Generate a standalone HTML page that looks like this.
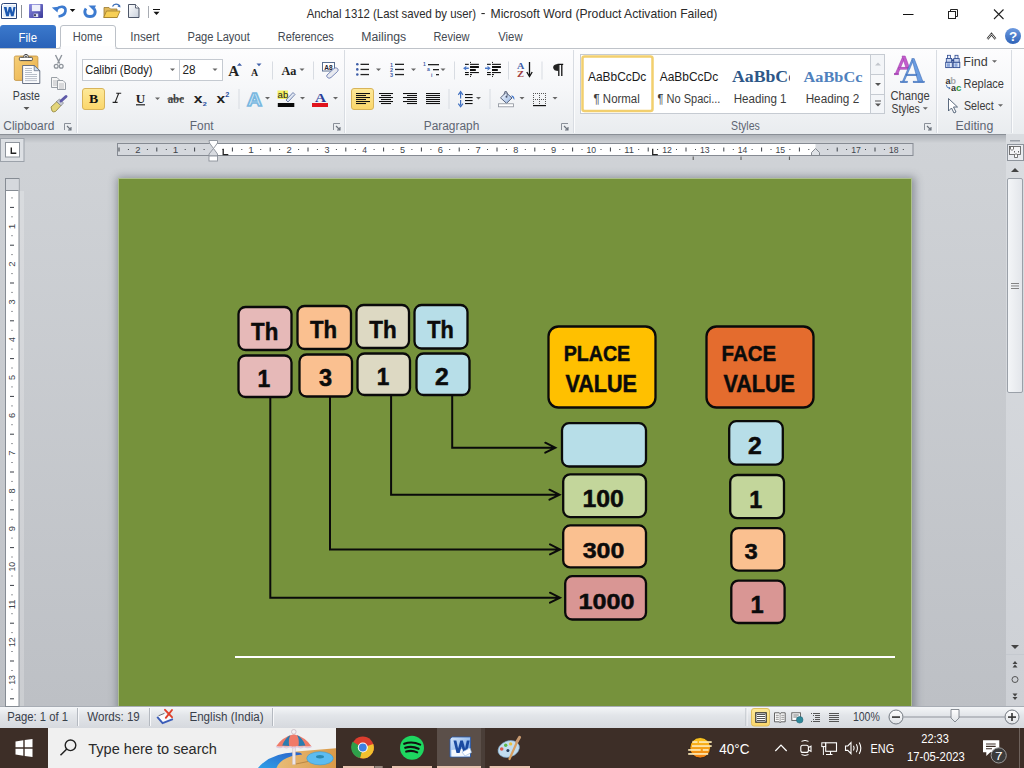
<!DOCTYPE html>
<html><head><meta charset="utf-8">
<style>
*{margin:0;padding:0;box-sizing:border-box}
html,body{width:1024px;height:768px;overflow:hidden;background:#cdd0d4;font-family:"Liberation Sans",sans-serif;position:relative}
.a{position:absolute}
svg text{white-space:pre}
</style></head><body>
<div class="a" style="left:0;top:0;width:1024px;height:48px;background:#fff"></div>
<div class="a" style="left:0;top:48px;width:1024px;height:87px;background:linear-gradient(#fdfdfe 0%,#f6f7f9 45%,#e9ecef 100%);border-top:1px solid #bfc3c9;border-bottom:1px solid #8a8f96"></div>
<div class="a" style="left:0;top:135px;width:1024px;height:571px;background:linear-gradient(#d0d3d7,#bdc0c5)"></div>
<div class="a" style="left:0;top:135px;width:1024px;height:8px;background:linear-gradient(#aeb2b8,#cfd2d6)"></div>
<div class="a" style="left:19px;top:191px;width:5px;height:515px;background:rgba(255,255,255,.22)"></div>
<div class="a" style="left:118px;top:178px;width:794px;height:540px;background:#76923c;border:1px solid #adc08a;box-shadow:1px 1px 8px 2px rgba(60,66,80,.45)"></div>
<div class="a" style="left:0;top:706px;width:1024px;height:22px;background:linear-gradient(#f4f6f8,#e2e5e9 40%,#d6d9de);border-top:1px solid #a8adb5"></div>
<div class="a" style="left:0;top:728px;width:1024px;height:40px;background:#3d2e27"></div>
<svg class="a" style="left:0;top:0" width="1024" height="768" viewBox="0 0 1024 768">
<defs>
<linearGradient id="gFile" x1="0" y1="0" x2="0" y2="1"><stop offset="0" stop-color="#3b79cc"/><stop offset="1" stop-color="#2a62b8"/></linearGradient>
<linearGradient id="gHelp" x1="0" y1="0" x2="0" y2="1"><stop offset="0" stop-color="#6d9ae0"/><stop offset="1" stop-color="#2f63b8"/></linearGradient>
<linearGradient id="gSel" x1="0" y1="0" x2="0" y2="1"><stop offset="0" stop-color="#fde99a"/><stop offset="1" stop-color="#fbd66a"/></linearGradient>
<linearGradient id="gThumb" x1="0" y1="0" x2="1" y2="0"><stop offset="0" stop-color="#f4f6f8"/><stop offset="1" stop-color="#e2e5ea"/></linearGradient>
<linearGradient id="gCirc" x1="0" y1="0" x2="0" y2="1"><stop offset="0" stop-color="#ffffff"/><stop offset="1" stop-color="#dfe2e6"/></linearGradient>
<linearGradient id="gShadowR" x1="0" y1="0" x2="1" y2="0"><stop offset="0" stop-color="#8f949c"/><stop offset="1" stop-color="#c9ccd1" stop-opacity="0"/></linearGradient>
<linearGradient id="gSB" x1="0" y1="0" x2="0" y2="1"><stop offset="0" stop-color="#dadde1"/><stop offset="1" stop-color="#cdd0d5"/></linearGradient>
<linearGradient id="gSun" x1="0" y1="0" x2="0" y2="1"><stop offset="0" stop-color="#fcc820"/><stop offset="1" stop-color="#ee7a10"/></linearGradient>
<linearGradient id="gWord" x1="0" y1="0" x2="1" y2="1"><stop offset="0" stop-color="#d6e6fa"/><stop offset="0.5" stop-color="#9cc0ee"/><stop offset="1" stop-color="#3c74c8"/></linearGradient>
<linearGradient id="gSand" x1="0" y1="0" x2="1" y2="0"><stop offset="0" stop-color="#e8bc78"/><stop offset="1" stop-color="#d99a48"/></linearGradient>
<linearGradient id="gPath" x1="0" y1="1" x2="1" y2="0"><stop offset="0" stop-color="#2fa0e8"/><stop offset="1" stop-color="#2a60c8"/></linearGradient>
<linearGradient id="gBucket" x1="0" y1="0" x2="1" y2="1"><stop offset="0" stop-color="#ffffff"/><stop offset="1" stop-color="#8fb0e0"/></linearGradient>
<linearGradient id="gClip" x1="0" y1="0" x2="1" y2="1"><stop offset="0" stop-color="#f6cf78"/><stop offset="1" stop-color="#eab04a"/></linearGradient>
<linearGradient id="gSave" x1="0" y1="0" x2="1" y2="1"><stop offset="0" stop-color="#8a8ae0"/><stop offset="1" stop-color="#3a3a98"/></linearGradient>
<linearGradient id="gDoc" x1="0" y1="0" x2="1" y2="1"><stop offset="0" stop-color="#ffffff"/><stop offset="1" stop-color="#c8d0dc"/></linearGradient>
</defs>

<rect x="238.5" y="307.0" width="53.0" height="43.0" rx="7" fill="#e6b9b8" stroke="#0a0a0a" stroke-width="2.3"/>
<rect x="297.5" y="306.0" width="53.5" height="43.0" rx="7" fill="#fac090" stroke="#0a0a0a" stroke-width="2.3"/>
<rect x="356.5" y="305.0" width="52.5" height="43.0" rx="7" fill="#ddd9c3" stroke="#0a0a0a" stroke-width="2.3"/>
<rect x="414.5" y="305.0" width="53.0" height="43.5" rx="7" fill="#b7dee8" stroke="#0a0a0a" stroke-width="2.3"/>
<rect x="238.5" y="355.5" width="53.0" height="41.5" rx="7" fill="#e6b9b8" stroke="#0a0a0a" stroke-width="2.3"/>
<rect x="299.5" y="354.5" width="52.5" height="42.0" rx="7" fill="#fac090" stroke="#0a0a0a" stroke-width="2.3"/>
<rect x="357.5" y="353.5" width="52.5" height="41.5" rx="7" fill="#ddd9c3" stroke="#0a0a0a" stroke-width="2.3"/>
<rect x="416.5" y="353.5" width="53.0" height="41.5" rx="7" fill="#b7dee8" stroke="#0a0a0a" stroke-width="2.3"/>
<rect x="548.5" y="326.5" width="107.0" height="81.0" rx="10" fill="#ffc000" stroke="#0a0a0a" stroke-width="2.3"/>
<rect x="706.5" y="326.5" width="107.0" height="81.0" rx="10" fill="#e46c2e" stroke="#0a0a0a" stroke-width="2.3"/>
<rect x="562.0" y="423.2" width="84.0" height="43.3" rx="7" fill="#b7dee8" stroke="#0a0a0a" stroke-width="2.3"/>
<rect x="563.2" y="474.3" width="82.8" height="42.8" rx="7" fill="#c3d69b" stroke="#0a0a0a" stroke-width="2.3"/>
<rect x="563.2" y="525.4" width="82.8" height="42.0" rx="7" fill="#fac090" stroke="#0a0a0a" stroke-width="2.3"/>
<rect x="565.2" y="576.2" width="80.8" height="43.3" rx="7" fill="#d99694" stroke="#0a0a0a" stroke-width="2.3"/>
<rect x="729.2" y="421.2" width="53.6" height="43.5" rx="7" fill="#b7dee8" stroke="#0a0a0a" stroke-width="2.3"/>
<rect x="730.2" y="475.0" width="53.8" height="43.2" rx="7" fill="#c3d69b" stroke="#0a0a0a" stroke-width="2.3"/>
<rect x="731.3" y="528.2" width="53.0" height="42.4" rx="7" fill="#fac090" stroke="#0a0a0a" stroke-width="2.3"/>
<rect x="731.3" y="580.6" width="53.3" height="42.4" rx="7" fill="#d99694" stroke="#0a0a0a" stroke-width="2.3"/>
<path d="M270.3 398V597.7H559.0M550.0 592.7L560.0 597.7L550.0 602.7" fill="none" stroke="#0a0a0a" stroke-width="2" stroke-linecap="round"/>
<path d="M330.0 397.5V549.4H559.0M550.0 544.4L560.0 549.4L550.0 554.4" fill="none" stroke="#0a0a0a" stroke-width="2" stroke-linecap="round"/>
<path d="M391.1 396V494.7H558.5M549.5 489.7L559.5 494.7L549.5 499.7" fill="none" stroke="#0a0a0a" stroke-width="2" stroke-linecap="round"/>
<path d="M452.2 396V447.7H554.3M545.3 442.7L555.3 447.7L545.3 452.7" fill="none" stroke="#0a0a0a" stroke-width="2" stroke-linecap="round"/>
<text x="251.10" y="339.65" font-family="Liberation Sans" font-weight="bold" fill="#0b0b0b" stroke="#0b0b0b" stroke-width="0.5" font-size="23.87" textLength="27.23" lengthAdjust="spacingAndGlyphs">Th</text>
<text x="310.00" y="338.35" font-family="Liberation Sans" font-weight="bold" fill="#0b0b0b" stroke="#0b0b0b" stroke-width="0.5" font-size="23.32" textLength="27.13" lengthAdjust="spacingAndGlyphs">Th</text>
<text x="369.30" y="337.75" font-family="Liberation Sans" font-weight="bold" fill="#0b0b0b" stroke="#0b0b0b" stroke-width="0.5" font-size="24.15" textLength="27.34" lengthAdjust="spacingAndGlyphs">Th</text>
<text x="427.31" y="337.75" font-family="Liberation Sans" font-weight="bold" fill="#0b0b0b" stroke="#0b0b0b" stroke-width="0.5" font-size="24.15" textLength="26.59" lengthAdjust="spacingAndGlyphs">Th</text>
<text x="257.50" y="386.65" font-family="Liberation Sans" font-weight="bold" fill="#0b0b0b" stroke="#0b0b0b" stroke-width="0.5" font-size="23.84" textLength="12.79" lengthAdjust="spacingAndGlyphs">1</text>
<text x="319.01" y="385.55" font-family="Liberation Sans" font-weight="bold" fill="#0b0b0b" stroke="#0b0b0b" stroke-width="0.5" font-size="23.20" textLength="13.09" lengthAdjust="spacingAndGlyphs">3</text>
<text x="376.73" y="384.65" font-family="Liberation Sans" font-weight="bold" fill="#0b0b0b" stroke="#0b0b0b" stroke-width="0.5" font-size="23.84" textLength="12.55" lengthAdjust="spacingAndGlyphs">1</text>
<text x="434.99" y="384.75" font-family="Liberation Sans" font-weight="bold" fill="#0b0b0b" stroke="#0b0b0b" stroke-width="0.5" font-size="23.63" textLength="13.75" lengthAdjust="spacingAndGlyphs">2</text>
<text x="563.64" y="360.55" font-family="Liberation Sans" font-weight="bold" fill="#0b0b0b" stroke="#0b0b0b" stroke-width="0.5" font-size="22.91" textLength="66.58" lengthAdjust="spacingAndGlyphs">PLACE</text>
<text x="565.51" y="391.55" font-family="Liberation Sans" font-weight="bold" fill="#0b0b0b" stroke="#0b0b0b" stroke-width="0.5" font-size="23.40" textLength="71.47" lengthAdjust="spacingAndGlyphs">VALUE</text>
<text x="721.61" y="360.55" font-family="Liberation Sans" font-weight="bold" fill="#0b0b0b" stroke="#0b0b0b" stroke-width="0.5" font-size="22.91" textLength="54.42" lengthAdjust="spacingAndGlyphs">FACE</text>
<text x="723.51" y="391.55" font-family="Liberation Sans" font-weight="bold" fill="#0b0b0b" stroke="#0b0b0b" stroke-width="0.5" font-size="23.40" textLength="71.47" lengthAdjust="spacingAndGlyphs">VALUE</text>
<text x="582.44" y="506.65" font-family="Liberation Sans" font-weight="bold" fill="#0b0b0b" stroke="#0b0b0b" stroke-width="0.5" font-size="23.49" textLength="41.43" lengthAdjust="spacingAndGlyphs">100</text>
<text x="582.68" y="557.75" font-family="Liberation Sans" font-weight="bold" fill="#0b0b0b" stroke="#0b0b0b" stroke-width="0.5" font-size="22.77" textLength="41.70" lengthAdjust="spacingAndGlyphs">300</text>
<text x="578.46" y="608.50" font-family="Liberation Sans" font-weight="bold" fill="#0b0b0b" stroke="#0b0b0b" stroke-width="0.5" font-size="22.84" textLength="56.07" lengthAdjust="spacingAndGlyphs">1000</text>
<text x="748.09" y="453.85" font-family="Liberation Sans" font-weight="bold" fill="#0b0b0b" stroke="#0b0b0b" stroke-width="0.5" font-size="23.20" textLength="13.75" lengthAdjust="spacingAndGlyphs">2</text>
<text x="749.37" y="507.75" font-family="Liberation Sans" font-weight="bold" fill="#0b0b0b" stroke="#0b0b0b" stroke-width="0.5" font-size="24.27" textLength="13.03" lengthAdjust="spacingAndGlyphs">1</text>
<text x="744.61" y="559.45" font-family="Liberation Sans" font-weight="bold" fill="#0b0b0b" stroke="#0b0b0b" stroke-width="0.5" font-size="21.77" textLength="13.20" lengthAdjust="spacingAndGlyphs">3</text>
<text x="750.46" y="612.55" font-family="Liberation Sans" font-weight="bold" fill="#0b0b0b" stroke="#0b0b0b" stroke-width="0.5" font-size="23.26" textLength="13.15" lengthAdjust="spacingAndGlyphs">1</text>

<rect x="235" y="656" width="660" height="2" fill="#ffffff"/>
<path d="M3.5 3.5 H16.5 V18.5 H1.5 V5.5 Q1.5 3.5 3.5 3.5Z" fill="#fff" stroke="#2a4478" stroke-width="1"/>
<rect x="3" y="5" width="12.5" height="12" fill="#e4eefa"/>
<path d="M3.8 7 L6.2 16.2 L8.8 16.2 L9.9 11.8 L11 16.2 L13.6 16.2 L15.6 7 L13.4 7 L12.4 12.2 L11.1 7 L8.8 7 L7.6 12.2 L6.6 7Z" fill="#1c58b0"/>
<rect x="21" y="5" width="1" height="13" fill="#8a8f96"/>
<rect x="29" y="4" width="14" height="14" rx="0.8" fill="url(#gSave)"/><rect x="31.9" y="4.7" width="8.4" height="6.5" fill="#eef0fa"/><rect x="33.7" y="13.6" width="4.5" height="3.4" fill="#dfe2f2"/><rect x="34.2" y="14.2" width="1.6" height="2" fill="#1a1a3a"/>
<path d="M56.5 9.5 C60 5.5 66 6 65.5 11 C65.2 14 62 16 58.5 16.5" fill="none" stroke="#3d7bd0" stroke-width="2.6"/>
<path d="M51.8 7.5 L58.5 6.8 L57.5 12.5Z" fill="#3d7bd0"/>
<path d="M69.8 9 h5.5 l-2.75 3z" fill="#111"/>
<path d="M86 8.5 C83.5 12 85 16.5 90 16.5 C95 16.5 96.5 12 94 8.5" fill="none" stroke="#3d7bd0" stroke-width="2.8"/>
<path d="M88.5 5.5 H96 L93.5 10.5Z" fill="#3d7bd0"/>
<path d="M104 7.5 h5 l1.5 1.5 h6.5 v8.5 h-13z" fill="#e0b85a" stroke="#9a7a30" stroke-width="0.8"/>
<path d="M106.5 11 h13.5 l-2.8 6.5 h-13.5z" fill="#f7cf55" stroke="#a07c28" stroke-width="0.8"/>
<path d="M112.5 6.5 C114 3.5 118 3.5 119.5 6" fill="none" stroke="#3d6fb8" stroke-width="1.3"/><path d="M117.5 6.5 L120.5 7.5 L120 4.5Z" fill="#3d6fb8"/>
<path d="M128.5 4.5 h7 l3.5 3.5 v9.5 h-10.5z" fill="url(#gDoc)" stroke="#3a4458" stroke-width="0.9"/><path d="M135.5 4.5 v3.5 h3.5" fill="#fff" stroke="#3a4458" stroke-width="0.8"/>
<rect x="148" y="6" width="1" height="12" fill="#a8acb3"/>
<rect x="153" y="9" width="7" height="1" fill="#111"/><path d="M153.5 11.8 h6 l-3 3.2z" fill="#111"/>
<text x="306.68" y="17.50" font-family="Liberation Sans" font-weight="normal" font-size="12.80" fill="#2b2b2b" textLength="169.43" lengthAdjust="spacingAndGlyphs" >Anchal 1312 (Last saved by user)</text>
<rect x="481.4" y="13" width="3.4" height="1.1" fill="#2b2b2b"/>
<text x="490.51" y="17.50" font-family="Liberation Sans" font-weight="normal" font-size="12.80" fill="#2b2b2b" textLength="226.84" lengthAdjust="spacingAndGlyphs" >Microsoft Word (Product Activation Failed)</text>
<rect x="903" y="14" width="10.5" height="1" fill="#111"/>
<rect x="948.5" y="11.5" width="7" height="7" fill="none" stroke="#222" stroke-width="1"/><path d="M950.5 11.5 v-2 h7 v7 h-2" fill="none" stroke="#222" stroke-width="1"/>
<path d="M994 9.5 L1003.5 19 M1003.5 9.5 L994 19" stroke="#222" stroke-width="1.1"/>
<path d="M0 48 V28 Q0 25 3 25 H53 Q56 25 56 28 V48Z" fill="url(#gFile)"/>
<text x="18.56" y="41.50" font-family="Liberation Sans" font-weight="normal" font-size="12.60" fill="#ffffff" textLength="18.45" lengthAdjust="spacingAndGlyphs" >File</text>
<path d="M58 48.5 Q60.5 48.5 60.5 46 V28 Q60.5 25.5 63 25.5 H113 Q115.5 25.5 115.5 28 V46 Q115.5 48.5 118 48.5" fill="#fff" stroke="#bcc1c8" stroke-width="1"/><rect x="61" y="46" width="54" height="3.5" fill="#fdfdfe"/>
<text x="72.79" y="41.30" font-family="Liberation Sans" font-weight="normal" font-size="12.30" fill="#444a52" textLength="29.71" lengthAdjust="spacingAndGlyphs" >Home</text>
<text x="130.22" y="41.30" font-family="Liberation Sans" font-weight="normal" font-size="12.30" fill="#444a52" textLength="29.27" lengthAdjust="spacingAndGlyphs" >Insert</text>
<text x="187.49" y="41.30" font-family="Liberation Sans" font-weight="normal" font-size="12.30" fill="#444a52" textLength="62.29" lengthAdjust="spacingAndGlyphs" >Page Layout</text>
<text x="277.80" y="41.30" font-family="Liberation Sans" font-weight="normal" font-size="12.30" fill="#444a52" textLength="55.89" lengthAdjust="spacingAndGlyphs" >References</text>
<text x="361.29" y="41.30" font-family="Liberation Sans" font-weight="normal" font-size="12.30" fill="#444a52" textLength="44.95" lengthAdjust="spacingAndGlyphs" >Mailings</text>
<text x="433.39" y="41.30" font-family="Liberation Sans" font-weight="normal" font-size="12.30" fill="#444a52" textLength="36.18" lengthAdjust="spacingAndGlyphs" >Review</text>
<text x="498.25" y="41.30" font-family="Liberation Sans" font-weight="normal" font-size="12.30" fill="#444a52" textLength="24.32" lengthAdjust="spacingAndGlyphs" >View</text>
<path d="M987.5 39 L991.5 34 L995.5 39" fill="none" stroke="#333" stroke-width="2.2"/><path d="M987.5 39 L991.5 34 L995.5 39" fill="none" stroke="#fff" stroke-width="0.8"/>
<circle cx="1013" cy="36" r="8" fill="url(#gHelp)"/>
<text x="1008.98" y="41.00" font-family="Liberation Sans" font-weight="bold" font-size="12.00" fill="#ffffff" textLength="8.19" lengthAdjust="spacingAndGlyphs" >?</text>
<rect x="76.0" y="50" width="1" height="83" fill="#d8dce2"/><rect x="77.0" y="50" width="1" height="83" fill="#fbfcfd"/>
<rect x="344.0" y="50" width="1" height="83" fill="#d8dce2"/><rect x="345.0" y="50" width="1" height="83" fill="#fbfcfd"/>
<rect x="573.0" y="50" width="1" height="83" fill="#d8dce2"/><rect x="574.0" y="50" width="1" height="83" fill="#fbfcfd"/>
<rect x="936.0" y="50" width="1" height="83" fill="#d8dce2"/><rect x="937.0" y="50" width="1" height="83" fill="#fbfcfd"/>
<rect x="1011.0" y="50" width="1" height="83" fill="#d8dce2"/><rect x="1012.0" y="50" width="1" height="83" fill="#fbfcfd"/>
<text x="3.29" y="129.60" font-family="Liberation Sans" font-weight="normal" font-size="12.30" fill="#5e6673" textLength="51.08" lengthAdjust="spacingAndGlyphs" >Clipboard</text>
<text x="189.83" y="129.60" font-family="Liberation Sans" font-weight="normal" font-size="12.30" fill="#5e6673" textLength="23.76" lengthAdjust="spacingAndGlyphs" >Font</text>
<text x="423.72" y="129.60" font-family="Liberation Sans" font-weight="normal" font-size="12.30" fill="#5e6673" textLength="55.55" lengthAdjust="spacingAndGlyphs" >Paragraph</text>
<text x="731.12" y="129.60" font-family="Liberation Sans" font-weight="normal" font-size="12.30" fill="#5e6673" textLength="28.76" lengthAdjust="spacingAndGlyphs" >Styles</text>
<text x="955.59" y="129.60" font-family="Liberation Sans" font-weight="normal" font-size="12.30" fill="#5e6673" textLength="37.71" lengthAdjust="spacingAndGlyphs" >Editing</text>
<path d="M64.5 130.0 V123.5 H71.0" fill="none" stroke="#8a9099" stroke-width="1"/><path d="M67.0 126.0 L71.0 130.0 M71.0 127.0 V130.0 H68.0" fill="none" stroke="#6b727c" stroke-width="1.1"/>
<path d="M333.5 130.0 V123.5 H340.0" fill="none" stroke="#8a9099" stroke-width="1"/><path d="M336.0 126.0 L340.0 130.0 M340.0 127.0 V130.0 H337.0" fill="none" stroke="#6b727c" stroke-width="1.1"/>
<path d="M561.5 130.0 V123.5 H568.0" fill="none" stroke="#8a9099" stroke-width="1"/><path d="M564.0 126.0 L568.0 130.0 M568.0 127.0 V130.0 H565.0" fill="none" stroke="#6b727c" stroke-width="1.1"/>
<path d="M924.5 130.0 V123.5 H931.0" fill="none" stroke="#8a9099" stroke-width="1"/><path d="M927.0 126.0 L931.0 130.0 M931.0 127.0 V130.0 H928.0" fill="none" stroke="#6b727c" stroke-width="1.1"/>
<rect x="14.3" y="56" width="23.6" height="24.4" rx="1.5" fill="url(#gClip)" stroke="#c09040" stroke-width="0.8"/>
<rect x="19.4" y="57.3" width="13" height="3.3" rx="1" fill="#fff" stroke="#4a4a4a" stroke-width="1"/><path d="M23.6 57.3 Q23.6 54.3 26 54.3 Q28.4 54.3 28.4 57.3" fill="#fff" stroke="#4a4a4a" stroke-width="1"/><circle cx="26" cy="56.4" r="0.9" fill="#4a4a4a"/>
<path d="M22.6 65.5 h11.6 l5.6 5.2 v12.8 h-17.2z" fill="#fbfcfe" stroke="#5a6478" stroke-width="0.9"/><path d="M34.2 65.5 v5.2 h5.6z" fill="#cfe0f0" stroke="#5a6478" stroke-width="0.7"/>
<g fill="#a8b0bc"><rect x="25" y="68" width="7" height="0.8"/><rect x="25" y="70" width="7" height="0.8"/><rect x="25" y="72.2" width="7" height="0.8"/><rect x="25" y="74.2" width="12" height="0.8"/><rect x="25" y="76.2" width="12" height="0.8"/><rect x="25" y="78.3" width="12" height="0.8"/><rect x="25" y="80.3" width="12" height="0.8"/></g>
<text x="12.83" y="99.80" font-family="Liberation Sans" font-weight="normal" font-size="12.30" fill="#3a3f46" textLength="27.04" lengthAdjust="spacingAndGlyphs" >Paste</text>
<path d="M23.5 107 h6 l-3 3z" fill="#555"/>
<path d="M55.5 55 L59.7 63.5 M61.8 55 L57.6 63.5" stroke="#8f959c" stroke-width="1.4"/><circle cx="56.2" cy="66.2" r="1.9" fill="none" stroke="#8f959c" stroke-width="1.3"/><circle cx="61.2" cy="66.2" r="1.9" fill="none" stroke="#8f959c" stroke-width="1.3"/>
<path d="M51.5 77.5 h5.5 l2.5 2.5 v7.5 h-8z" fill="#f6f6f6" stroke="#8f959c" stroke-width="0.9"/><path d="M53 81h4.5M53 83h4.5M53 85h4.5" stroke="#a0a5ab" stroke-width="0.7"/>
<path d="M57.5 80.5 h5.5 l2.5 2.5 v6.5 h-8z" fill="#f6f6f6" stroke="#8f959c" stroke-width="0.9"/><path d="M59 84h5M59 86h5M59 88h5" stroke="#a0a5ab" stroke-width="0.7"/>
<path d="M51 107 L57 101.5 L61 105.5 L55.5 111.5 Q53 112.5 52 111Z" fill="#e3d57a" stroke="#8c7f3a" stroke-width="0.8"/>
<path d="M56.5 101.5 L59.5 99 L63.5 103 L61 105.8Z" fill="#c9ccd4" stroke="#6a6e78" stroke-width="0.6"/>
<path d="M61 101 L66 96.5" stroke="#5f5aa8" stroke-width="3" stroke-linecap="round"/>
<rect x="82.5" y="59.5" width="97" height="21" fill="#fff" stroke="#c5cad1"/>
<rect x="179.5" y="59.5" width="43" height="21" fill="#fff" stroke="#c5cad1"/>
<text x="85.14" y="74.40" font-family="Liberation Sans" font-weight="normal" font-size="12.30" fill="#222" textLength="67.35" lengthAdjust="spacingAndGlyphs" >Calibri (Body)</text>
<text x="182.41" y="74.40" font-family="Liberation Sans" font-weight="normal" font-size="12.30" fill="#222" textLength="13.10" lengthAdjust="spacingAndGlyphs" >28</text>
<path d="M170 68.5 h5 l-2.5 2.5z" fill="#666"/><path d="M212.5 68.5 h5 l-2.5 2.5z" fill="#666"/>
<text x="228.15" y="76.00" font-family="Liberation Serif" font-weight="bold" font-size="15.00" fill="#222" textLength="10.96" lengthAdjust="spacingAndGlyphs" >A</text>
<path d="M237 65.8 h5 l-2.5 -2.8z" fill="#3f5fa8"/>
<text x="250.90" y="76.00" font-family="Liberation Serif" font-weight="bold" font-size="9.50" fill="#222" textLength="7.17" lengthAdjust="spacingAndGlyphs" >A</text>
<path d="M256.5 63.5 h5 l-2.5 2.8z" fill="#3f5fa8"/>
<rect x="272" y="61.5" width="1" height="18" fill="#d8dce2"/>
<text x="281.48" y="75.00" font-family="Liberation Serif" font-weight="bold" font-size="13.00" fill="#222" textLength="14.90" lengthAdjust="spacingAndGlyphs" >Aa</text>
<path d="M299.5 68.5 h5 l-2.5 2.5z" fill="#666"/>
<rect x="313" y="61.5" width="1" height="18" fill="#d8dce2"/>
<rect x="322.5" y="62.5" width="12" height="8.5" fill="#fff" stroke="#5a6f90" stroke-width="1"/>
<text x="324.34" y="69.50" font-family="Liberation Sans" font-weight="bold" font-size="7.00" fill="#223" textLength="8.36" lengthAdjust="spacingAndGlyphs" >A8</text>
<path d="M327 75 L334 68.5 Q336 67 337.5 68.5 Q339 70 337.5 71.5 L331 77.5 Q329 79 327.5 77.5 Q326 76 327 75Z" fill="#e8eaf0" stroke="#6a7bb0" stroke-width="0.9"/>
<rect x="82.5" y="88.5" width="22" height="21" rx="2.5" fill="url(#gSel)" stroke="#d8b45a" stroke-width="1"/>
<text x="89.07" y="102.80" font-family="Liberation Serif" font-weight="bold" font-size="12.50" fill="#111" textLength="9.21" lengthAdjust="spacingAndGlyphs" >B</text>
<path d="M116.2 93.2 H121.2 M112.6 102.4 H117.6 M118.7 93.2 L115.1 102.4" fill="none" stroke="#222" stroke-width="1.1"/>
<text x="135.67" y="102.80" font-family="Liberation Serif" font-weight="bold" font-size="11.50" fill="#222" textLength="9.45" lengthAdjust="spacingAndGlyphs" >U</text>
<rect x="136" y="104.2" width="9" height="1.2" fill="#222"/>
<path d="M155 97.5 h5 l-2.5 2.5z" fill="#666"/>
<text x="167.65" y="102.50" font-family="Liberation Serif" font-weight="bold" font-size="11.50" fill="#444" textLength="16.43" lengthAdjust="spacingAndGlyphs" >abc</text>
<rect x="167.5" y="98.3" width="16.5" height="1.2" fill="#444"/>
<text x="193.89" y="103.00" font-family="Liberation Sans" font-weight="bold" font-size="13.00" fill="#222" textLength="8.72" lengthAdjust="spacingAndGlyphs" >x</text>
<text x="202.75" y="105.50" font-family="Liberation Sans" font-weight="bold" font-size="6.00" fill="#2a50a0" textLength="4.04" lengthAdjust="spacingAndGlyphs" >2</text>
<text x="216.49" y="103.00" font-family="Liberation Sans" font-weight="bold" font-size="13.00" fill="#222" textLength="8.62" lengthAdjust="spacingAndGlyphs" >x</text>
<text x="225.25" y="96.50" font-family="Liberation Sans" font-weight="bold" font-size="6.50" fill="#2a50a0" textLength="4.04" lengthAdjust="spacingAndGlyphs" >2</text>
<rect x="238.5" y="89" width="1" height="20" fill="#d8dce2"/>
<text x="247" y="105.5" font-family="Liberation Sans" font-weight="bold" font-size="19" fill="#d6ecfa" stroke="#7ab8e0" stroke-width="1.6" textLength="15" lengthAdjust="spacingAndGlyphs">A</text>
<path d="M265 97 h5 l-2.5 2.5z" fill="#666"/>
<rect x="277.5" y="90.5" width="10.5" height="8.5" fill="#f2f060"/>
<text x="277.59" y="98.20" font-family="Liberation Sans" font-weight="normal" font-size="9.50" fill="#222" textLength="10.71" lengthAdjust="spacingAndGlyphs" >ab</text>
<path d="M286 100 L293 92.5 L295 94.5 L288 102Z" fill="#dfe6f2" stroke="#556a9a" stroke-width="0.8"/>
<rect x="277.8" y="103" width="16.5" height="4" fill="#0a0a0a"/>
<path d="M300 97 h5 l-2.5 2.5z" fill="#666"/>
<text x="315.05" y="102.00" font-family="Liberation Serif" font-weight="bold" font-size="13.50" fill="#2b3f9a" textLength="11.06" lengthAdjust="spacingAndGlyphs" >A</text>
<rect x="312" y="103" width="16" height="4" fill="#e0141e"/>
<path d="M333 97 h5 l-2.5 2.5z" fill="#666"/>
<circle cx="357.3" cy="64.3" r="1.3" fill="#3f5fa8"/><rect x="360.5" y="63.699999999999996" width="8.5" height="1.3" fill="#222"/>
<circle cx="357.3" cy="69.4" r="1.3" fill="#3f5fa8"/><rect x="360.5" y="68.80000000000001" width="8.5" height="1.3" fill="#222"/>
<circle cx="357.3" cy="74.5" r="1.3" fill="#3f5fa8"/><rect x="360.5" y="73.9" width="8.5" height="1.3" fill="#222"/>
<path d="M376 68.5 h5 l-2.5 2.5z" fill="#666"/>
<text x="390" y="66.8" font-family="Liberation Sans" font-weight="bold" font-size="5.5" fill="#3f5fa8">1</text><rect x="395" y="63.699999999999996" width="9" height="1.3" fill="#222"/>
<text x="390" y="71.9" font-family="Liberation Sans" font-weight="bold" font-size="5.5" fill="#3f5fa8">2</text><rect x="395" y="68.80000000000001" width="9" height="1.3" fill="#222"/>
<text x="390" y="77.0" font-family="Liberation Sans" font-weight="bold" font-size="5.5" fill="#3f5fa8">3</text><rect x="395" y="73.9" width="9" height="1.3" fill="#222"/>
<path d="M411 68.5 h5 l-2.5 2.5z" fill="#666"/>
<text x="423" y="66" font-family="Liberation Sans" font-weight="bold" font-size="5" fill="#3f5fa8">1</text><rect x="428" y="64" width="11" height="1.3" fill="#222"/>
<text x="427" y="71" font-family="Liberation Sans" font-weight="bold" font-size="5" fill="#3f5fa8">a</text><rect x="433" y="69" width="6" height="1.3" fill="#222"/>
<text x="431" y="76.5" font-family="Liberation Sans" font-weight="bold" font-size="5" fill="#3f5fa8">i</text><rect x="436" y="74" width="3" height="1.3" fill="#222"/>
<path d="M440.5 68.5 h5 l-2.5 2.5z" fill="#666"/>
<rect x="454" y="61.5" width="1" height="18" fill="#d8dce2"/>
<rect x="470" y="61.9" width="1" height="1" fill="#111"/><rect x="470" y="75.9" width="1" height="1" fill="#111"/><rect x="465" y="63.8" width="3.8" height="1.1" fill="#111"/><rect x="465" y="72" width="3.8" height="1.1" fill="#111"/><rect x="465" y="74" width="3.8" height="1.1" fill="#111"/><rect x="470" y="63.8" width="8.9" height="1.1" fill="#111"/><rect x="470" y="66" width="8.9" height="2" fill="#111"/><rect x="470" y="69" width="5.8" height="2" fill="#111"/><rect x="470" y="72" width="8.9" height="1.1" fill="#111"/><rect x="470" y="74" width="1.9" height="1.1" fill="#111"/><path d="M463 68.3 L466.5 65.8 L466 67.5 H468.8 V69.1 H466 L466.5 70.8Z" fill="#4a78c8"/>
<rect x="492" y="61.9" width="1" height="1" fill="#111"/><rect x="492" y="75.9" width="1" height="1" fill="#111"/><rect x="487" y="63.8" width="3.8" height="1.1" fill="#111"/><rect x="487" y="72" width="3.8" height="1.1" fill="#111"/><rect x="487" y="74" width="3.8" height="1.1" fill="#111"/><rect x="492" y="63.8" width="8.9" height="1.1" fill="#111"/><rect x="492" y="66" width="8.9" height="2" fill="#111"/><rect x="492" y="69" width="5.8" height="2" fill="#111"/><rect x="492" y="72" width="8.9" height="1.1" fill="#111"/><rect x="492" y="74" width="1.9" height="1.1" fill="#111"/><path d="M490.8 68.3 L487.3 65.8 L487.8 67.5 H485 V69.1 H487.8 L487.3 70.8Z" fill="#4a78c8"/>
<rect x="508" y="61.5" width="1" height="18" fill="#d8dce2"/>
<text x="516.90" y="68.80" font-family="Liberation Serif" font-weight="bold" font-size="8.50" fill="#3f5fa8" textLength="7.37" lengthAdjust="spacingAndGlyphs" >A</text>
<text x="516.99" y="77.00" font-family="Liberation Serif" font-weight="bold" font-size="8.50" fill="#a03c3c" textLength="7.04" lengthAdjust="spacingAndGlyphs" >Z</text>
<path d="M529.5 62 V75.5" stroke="#111" stroke-width="1.3"/><path d="M526.8 72 L529.5 76.5 L532.2 72" fill="none" stroke="#111" stroke-width="1.3"/>
<rect x="541.5" y="61.5" width="1" height="18" fill="#d8dce2"/>
<path d="M557.5 64.3 H563.2 M558.8 64.3 V76 M561.8 64.3 V76" fill="none" stroke="#111" stroke-width="1.3"/><path d="M558.5 64 Q553 64 553.2 67.5 Q553.4 71 558.5 71Z" fill="#222"/>
<rect x="351.5" y="88.5" width="22" height="21" rx="2.5" fill="url(#gSel)" stroke="#d8b45a" stroke-width="1"/>
<rect x="356" y="93" width="14" height="1.05" fill="#111"/><rect x="356" y="95" width="10" height="1.05" fill="#111"/><rect x="356" y="97" width="14" height="1.05" fill="#111"/><rect x="356" y="99" width="10" height="1.05" fill="#111"/><rect x="356" y="101" width="14" height="1.05" fill="#111"/><rect x="356" y="103" width="10" height="1.05" fill="#111"/>
<rect x="379.0" y="93" width="14" height="1.05" fill="#111"/><rect x="381.0" y="95" width="10" height="1.05" fill="#111"/><rect x="379.0" y="97" width="14" height="1.05" fill="#111"/><rect x="381.0" y="99" width="10" height="1.05" fill="#111"/><rect x="379.0" y="101" width="14" height="1.05" fill="#111"/><rect x="381.0" y="103" width="10" height="1.05" fill="#111"/>
<rect x="403" y="93" width="14" height="1.05" fill="#111"/><rect x="407" y="95" width="10" height="1.05" fill="#111"/><rect x="403" y="97" width="14" height="1.05" fill="#111"/><rect x="407" y="99" width="10" height="1.05" fill="#111"/><rect x="403" y="101" width="14" height="1.05" fill="#111"/><rect x="407" y="103" width="10" height="1.05" fill="#111"/>
<rect x="426" y="93" width="14" height="1.05" fill="#111"/><rect x="426" y="95" width="14" height="1.05" fill="#111"/><rect x="426" y="97" width="14" height="1.05" fill="#111"/><rect x="426" y="99" width="14" height="1.05" fill="#111"/><rect x="426" y="101" width="14" height="1.05" fill="#111"/><rect x="426" y="103" width="14" height="1.05" fill="#111"/>
<rect x="448.5" y="89" width="1" height="20" fill="#d8dce2"/>
<path d="M460.6 93 V98.5 M460.6 100 V105.5" stroke="#3f6fc0" stroke-width="1.2"/><path d="M458.3 94.8 L460.6 91.6 L462.9 94.8 M458.3 103.6 L460.6 106.8 L462.9 103.6" fill="none" stroke="#3f6fc0" stroke-width="1.2"/>
<g fill="#111"><rect x="465" y="94" width="7.6" height="1.1"/><rect x="465" y="97" width="7.6" height="1.1"/><rect x="465" y="100" width="7.6" height="1.1"/><rect x="465" y="103" width="7.6" height="1.1"/></g>
<path d="M476 97 h5 l-2.5 2.5z" fill="#666"/>
<rect x="489.5" y="89" width="1" height="20" fill="#d8dce2"/>
<path d="M500.5 97.8 L506 92.5 L512 98 L506.5 103.3Z" fill="url(#gBucket)" stroke="#4a5570" stroke-width="0.9"/>
<path d="M504 94.5 Q504.5 90 506.5 91.5 Q508 93 507 96" fill="none" stroke="#4a5570" stroke-width="0.8"/><circle cx="506.5" cy="96.8" r="1" fill="#4a5570"/>
<path d="M511 95.5 Q515 95.5 514.3 100 L513 98Z" fill="#3a70c8"/>
<rect x="498.5" y="103.8" width="15" height="3" fill="#fff" stroke="#8a9099" stroke-width="0.8"/>
<path d="M519.5 97 h5 l-2.5 2.5z" fill="#666"/>
<g fill="#555"><rect x="533" y="93" width="1" height="1"/><rect x="533" y="99" width="1" height="1"/><rect x="535" y="93" width="1" height="1"/><rect x="535" y="99" width="1" height="1"/><rect x="537" y="93" width="1" height="1"/><rect x="537" y="99" width="1" height="1"/><rect x="539" y="93" width="1" height="1"/><rect x="539" y="99" width="1" height="1"/><rect x="541" y="93" width="1" height="1"/><rect x="541" y="99" width="1" height="1"/><rect x="543" y="93" width="1" height="1"/><rect x="543" y="99" width="1" height="1"/><rect x="545" y="93" width="1" height="1"/><rect x="545" y="99" width="1" height="1"/><rect x="533" y="93" width="1" height="1"/><rect x="539" y="93" width="1" height="1"/><rect x="545" y="93" width="1" height="1"/><rect x="533" y="95" width="1" height="1"/><rect x="539" y="95" width="1" height="1"/><rect x="545" y="95" width="1" height="1"/><rect x="533" y="97" width="1" height="1"/><rect x="539" y="97" width="1" height="1"/><rect x="545" y="97" width="1" height="1"/><rect x="533" y="99" width="1" height="1"/><rect x="539" y="99" width="1" height="1"/><rect x="545" y="99" width="1" height="1"/><rect x="533" y="101" width="1" height="1"/><rect x="539" y="101" width="1" height="1"/><rect x="545" y="101" width="1" height="1"/><rect x="533" y="103" width="1" height="1"/><rect x="539" y="103" width="1" height="1"/><rect x="545" y="103" width="1" height="1"/></g>
<rect x="533" y="105" width="13" height="1.2" fill="#111"/>
<path d="M552.5 97 h5 l-2.5 2.5z" fill="#666"/>
<rect x="580.5" y="54.5" width="304" height="59" fill="#fff" stroke="#c6cbd2"/>
<rect x="582.5" y="56.5" width="70" height="54.5" rx="2" fill="#fff" stroke="#f2cf6e" stroke-width="2.5"/>
<text x="587.98" y="81.00" font-family="Liberation Sans" font-weight="normal" font-size="13.30" fill="#1a1a1a" textLength="58.34" lengthAdjust="spacingAndGlyphs" >AaBbCcDc</text>
<text x="593.55" y="102.80" font-family="Liberation Sans" font-weight="normal" font-size="12.30" fill="#3c3c3c" textLength="46.21" lengthAdjust="spacingAndGlyphs" >¶ Normal</text>
<text x="659.68" y="81.00" font-family="Liberation Sans" font-weight="normal" font-size="13.30" fill="#1a1a1a" textLength="58.44" lengthAdjust="spacingAndGlyphs" >AaBbCcDc</text>
<text x="657.57" y="102.80" font-family="Liberation Sans" font-weight="normal" font-size="12.30" fill="#3c3c3c" textLength="62.84" lengthAdjust="spacingAndGlyphs" >¶ No Spaci...</text>
<svg x="720" y="60" width="70" height="30"><text x="12" y="22.4" font-family="Liberation Serif" font-weight="bold" font-size="17.5" fill="#2d5788" textLength="64" lengthAdjust="spacingAndGlyphs">AaBbCc</text></svg>
<text x="733.65" y="102.80" font-family="Liberation Sans" font-weight="normal" font-size="12.30" fill="#3c3c3c" textLength="52.92" lengthAdjust="spacingAndGlyphs" >Heading 1</text>
<text x="803.64" y="81.50" font-family="Liberation Serif" font-weight="bold" font-size="14.20" fill="#4f81bd" textLength="58.76" lengthAdjust="spacingAndGlyphs" >AaBbCc</text>
<text x="805.64" y="102.80" font-family="Liberation Sans" font-weight="normal" font-size="12.30" fill="#3c3c3c" textLength="53.55" lengthAdjust="spacingAndGlyphs" >Heading 2</text>
<rect x="870.5" y="54.5" width="14" height="59" fill="#f3f5f8" stroke="#c6cbd2"/>
<rect x="870.5" y="74.5" width="14" height="20" fill="#f7f8fa" stroke="#c6cbd2"/>
<path d="M875 65.5 h6 l-3 -3z" fill="#c2c6cc"/>
<path d="M875 83 h6 l-3 3z" fill="#555"/>
<rect x="875" y="100.5" width="6" height="1" fill="#555"/><path d="M875 103.5 h6 l-3 3z" fill="#555"/>
<g fill="#c45ccc" stroke="#9838a8" stroke-width="0.5"><path d="M902 56 L905.2 56 L909.8 68.5 L906.2 68.5 Z"/><path d="M902.3 57.5 L895 74.3 L897.8 74.3 L903.8 60Z"/><rect x="898.8" y="67.2" width="9" height="2"/><rect x="894.6" y="73.6" width="4" height="1.2"/></g>
<g fill="#6b9de2" stroke="#3a68b2" stroke-width="0.55"><path d="M911.8 58.6 L914.2 58.6 L923 81.8 L918 81.8 Z"/><path d="M911.9 59.6 L902.3 81.8 L904 81.8 L912.8 61.8Z"/><rect x="906.2" y="74.2" width="10.6" height="1.5"/><rect x="900.6" y="81.2" width="7" height="1.5"/><rect x="913.2" y="81.2" width="11.2" height="1.5"/></g>
<text x="890.43" y="99.80" font-family="Liberation Sans" font-weight="normal" font-size="12.30" fill="#3c3c3c" textLength="39.27" lengthAdjust="spacingAndGlyphs" >Change</text>
<text x="891.53" y="112.70" font-family="Liberation Sans" font-weight="normal" font-size="12.30" fill="#3c3c3c" textLength="28.25" lengthAdjust="spacingAndGlyphs" >Styles</text>
<path d="M922.8 107.3 h5 l-2.5 2.5z" fill="#666"/>
<rect x="947.5" y="55.3" width="3" height="3.2" fill="#e8eefa" stroke="#2d4a90" stroke-width="0.8"/><rect x="946.3" y="58.5" width="5.4" height="3.8" fill="#c9d6f0" stroke="#2d4a90" stroke-width="0.8"/><rect x="945.7" y="62.3" width="6.6" height="5.3" fill="#dfe8f8" stroke="#2d4a90" stroke-width="0.9"/><rect x="947.0" y="63.3" width="3" height="3.5" fill="#8aa6dc"/>
<rect x="955" y="55.3" width="3" height="3.2" fill="#e8eefa" stroke="#2d4a90" stroke-width="0.8"/><rect x="953.8" y="58.5" width="5.4" height="3.8" fill="#c9d6f0" stroke="#2d4a90" stroke-width="0.8"/><rect x="953.2" y="62.3" width="6.6" height="5.3" fill="#dfe8f8" stroke="#2d4a90" stroke-width="0.9"/><rect x="954.5" y="63.3" width="3" height="3.5" fill="#8aa6dc"/>
<rect x="951.5" y="59.3" width="2.5" height="2.2" fill="#2d4a90"/>
<text x="963.37" y="66.00" font-family="Liberation Sans" font-weight="normal" font-size="12.30" fill="#3c3c3c" textLength="24.33" lengthAdjust="spacingAndGlyphs" >Find</text>
<path d="M992 60.3 h5 l-2.5 2.5z" fill="#666"/>
<text x="945.54" y="83.70" font-family="Liberation Sans" font-weight="bold" font-size="9.80" fill="#333" textLength="5.01" lengthAdjust="spacingAndGlyphs" >a</text>
<text x="950.37" y="83.70" font-family="Liberation Sans" font-weight="bold" font-size="9.80" fill="#aaa" textLength="5.82" lengthAdjust="spacingAndGlyphs" >b</text>
<text x="950.94" y="90.80" font-family="Liberation Sans" font-weight="bold" font-size="9.80" fill="#333" textLength="5.01" lengthAdjust="spacingAndGlyphs" >a</text>
<text x="956.12" y="90.80" font-family="Liberation Sans" font-weight="bold" font-size="9.80" fill="#2e9a3a" textLength="5.36" lengthAdjust="spacingAndGlyphs" >c</text>
<path d="M946.3 84.8 Q946.5 88.2 949.8 88.2" fill="none" stroke="#3f6fb0" stroke-width="0.9"/><path d="M948.8 86.8 L950.6 88.2 L948.8 89.6Z" fill="#3f6fb0"/>
<text x="963.49" y="87.70" font-family="Liberation Sans" font-weight="normal" font-size="12.30" fill="#3c3c3c" textLength="40.50" lengthAdjust="spacingAndGlyphs" >Replace</text>
<path d="M948.5 98.5 V111 L951.5 108 L954 113 L956 112 L953.5 107 L957.5 107Z" fill="#fff" stroke="#4a5a70" stroke-width="0.9"/>
<text x="963.91" y="109.90" font-family="Liberation Sans" font-weight="normal" font-size="12.30" fill="#3c3c3c" textLength="29.76" lengthAdjust="spacingAndGlyphs" >Select</text>
<path d="M998 104.3 h5 l-2.5 2.5z" fill="#666"/>
<rect x="0.5" y="138.5" width="23.5" height="23" fill="#dde0e4" stroke="#9ca2aa"/>
<rect x="5.5" y="142.5" width="14" height="14.5" fill="#fff" stroke="#8e949c"/>
<path d="M11.3 147.5 V153.3 H16.3" fill="none" stroke="#222" stroke-width="1.4"/>
<rect x="117.5" y="143.5" width="795.5" height="12" fill="#d5d8dd" stroke="#868b93"/>
<rect x="213.5" y="144" width="602" height="11" fill="#ffffff"/>
<rect x="118.5" y="147.5" width="1" height="4" fill="#3a3f46"/>
<rect x="127.9" y="149" width="1" height="1" fill="#3a3f46"/>
<text x="135.28" y="152.50" font-family="Liberation Sans" font-weight="normal" font-size="9.00" fill="#40454c" textLength="5.25" lengthAdjust="spacingAndGlyphs" >2</text>
<rect x="146.9" y="149" width="1" height="1" fill="#3a3f46"/>
<rect x="156.3" y="147.5" width="1" height="4" fill="#3a3f46"/>
<rect x="165.8" y="149" width="1" height="1" fill="#3a3f46"/>
<text x="172.79" y="152.50" font-family="Liberation Sans" font-weight="normal" font-size="9.00" fill="#40454c" textLength="5.55" lengthAdjust="spacingAndGlyphs" >1</text>
<rect x="184.7" y="149" width="1" height="1" fill="#3a3f46"/>
<rect x="194.1" y="147.5" width="1" height="4" fill="#3a3f46"/>
<rect x="203.6" y="149" width="1" height="1" fill="#3a3f46"/>
<rect x="222.4" y="149" width="1" height="1" fill="#3a3f46"/>
<rect x="231.9" y="147.5" width="1" height="4" fill="#3a3f46"/>
<rect x="241.3" y="149" width="1" height="1" fill="#3a3f46"/>
<text x="248.39" y="152.50" font-family="Liberation Sans" font-weight="normal" font-size="9.00" fill="#40454c" textLength="5.55" lengthAdjust="spacingAndGlyphs" >1</text>
<rect x="260.2" y="149" width="1" height="1" fill="#3a3f46"/>
<rect x="269.7" y="147.5" width="1" height="4" fill="#3a3f46"/>
<rect x="279.1" y="149" width="1" height="1" fill="#3a3f46"/>
<text x="286.48" y="152.50" font-family="Liberation Sans" font-weight="normal" font-size="9.00" fill="#40454c" textLength="5.25" lengthAdjust="spacingAndGlyphs" >2</text>
<rect x="298.1" y="149" width="1" height="1" fill="#3a3f46"/>
<rect x="307.5" y="147.5" width="1" height="4" fill="#3a3f46"/>
<rect x="316.9" y="149" width="1" height="1" fill="#3a3f46"/>
<text x="324.40" y="152.50" font-family="Liberation Sans" font-weight="normal" font-size="9.00" fill="#40454c" textLength="5.04" lengthAdjust="spacingAndGlyphs" >3</text>
<rect x="335.9" y="149" width="1" height="1" fill="#3a3f46"/>
<rect x="345.3" y="147.5" width="1" height="4" fill="#3a3f46"/>
<rect x="354.8" y="149" width="1" height="1" fill="#3a3f46"/>
<text x="362.35" y="152.50" font-family="Liberation Sans" font-weight="normal" font-size="9.00" fill="#40454c" textLength="4.75" lengthAdjust="spacingAndGlyphs" >4</text>
<rect x="373.6" y="149" width="1" height="1" fill="#3a3f46"/>
<rect x="383.1" y="147.5" width="1" height="4" fill="#3a3f46"/>
<rect x="392.5" y="149" width="1" height="1" fill="#3a3f46"/>
<text x="399.99" y="152.50" font-family="Liberation Sans" font-weight="normal" font-size="9.00" fill="#40454c" textLength="5.04" lengthAdjust="spacingAndGlyphs" >5</text>
<rect x="411.4" y="149" width="1" height="1" fill="#3a3f46"/>
<rect x="420.9" y="147.5" width="1" height="4" fill="#3a3f46"/>
<rect x="430.4" y="149" width="1" height="1" fill="#3a3f46"/>
<text x="437.68" y="152.50" font-family="Liberation Sans" font-weight="normal" font-size="9.00" fill="#40454c" textLength="5.18" lengthAdjust="spacingAndGlyphs" >6</text>
<rect x="449.2" y="149" width="1" height="1" fill="#3a3f46"/>
<rect x="458.7" y="147.5" width="1" height="4" fill="#3a3f46"/>
<rect x="468.1" y="149" width="1" height="1" fill="#3a3f46"/>
<text x="475.47" y="152.50" font-family="Liberation Sans" font-weight="normal" font-size="9.00" fill="#40454c" textLength="5.26" lengthAdjust="spacingAndGlyphs" >7</text>
<rect x="487.0" y="149" width="1" height="1" fill="#3a3f46"/>
<rect x="496.5" y="147.5" width="1" height="4" fill="#3a3f46"/>
<rect x="505.9" y="149" width="1" height="1" fill="#3a3f46"/>
<text x="513.35" y="152.50" font-family="Liberation Sans" font-weight="normal" font-size="9.00" fill="#40454c" textLength="5.10" lengthAdjust="spacingAndGlyphs" >8</text>
<rect x="524.8" y="149" width="1" height="1" fill="#3a3f46"/>
<rect x="534.3" y="147.5" width="1" height="4" fill="#3a3f46"/>
<rect x="543.8" y="149" width="1" height="1" fill="#3a3f46"/>
<text x="551.11" y="152.50" font-family="Liberation Sans" font-weight="normal" font-size="9.00" fill="#40454c" textLength="5.18" lengthAdjust="spacingAndGlyphs" >9</text>
<rect x="562.6" y="149" width="1" height="1" fill="#3a3f46"/>
<rect x="572.1" y="147.5" width="1" height="4" fill="#3a3f46"/>
<rect x="581.5" y="149" width="1" height="1" fill="#3a3f46"/>
<text x="586.54" y="152.50" font-family="Liberation Sans" font-weight="normal" font-size="9.00" fill="#40454c" textLength="9.59" lengthAdjust="spacingAndGlyphs" >10</text>
<rect x="600.5" y="149" width="1" height="1" fill="#3a3f46"/>
<rect x="609.9" y="147.5" width="1" height="4" fill="#3a3f46"/>
<rect x="619.3" y="149" width="1" height="1" fill="#3a3f46"/>
<text x="624.34" y="152.50" font-family="Liberation Sans" font-weight="normal" font-size="9.00" fill="#40454c" textLength="9.69" lengthAdjust="spacingAndGlyphs" >11</text>
<rect x="638.2" y="149" width="1" height="1" fill="#3a3f46"/>
<rect x="647.7" y="147.5" width="1" height="4" fill="#3a3f46"/>
<rect x="657.1" y="149" width="1" height="1" fill="#3a3f46"/>
<text x="662.14" y="152.50" font-family="Liberation Sans" font-weight="normal" font-size="9.00" fill="#40454c" textLength="9.70" lengthAdjust="spacingAndGlyphs" >12</text>
<rect x="676.0" y="149" width="1" height="1" fill="#3a3f46"/>
<rect x="685.5" y="147.5" width="1" height="4" fill="#3a3f46"/>
<rect x="695.0" y="149" width="1" height="1" fill="#3a3f46"/>
<text x="699.94" y="152.50" font-family="Liberation Sans" font-weight="normal" font-size="9.00" fill="#40454c" textLength="9.64" lengthAdjust="spacingAndGlyphs" >13</text>
<rect x="713.8" y="149" width="1" height="1" fill="#3a3f46"/>
<rect x="723.3" y="147.5" width="1" height="4" fill="#3a3f46"/>
<rect x="732.8" y="149" width="1" height="1" fill="#3a3f46"/>
<text x="737.75" y="152.50" font-family="Liberation Sans" font-weight="normal" font-size="9.00" fill="#40454c" textLength="9.50" lengthAdjust="spacingAndGlyphs" >14</text>
<rect x="751.6" y="149" width="1" height="1" fill="#3a3f46"/>
<rect x="761.1" y="147.5" width="1" height="4" fill="#3a3f46"/>
<rect x="770.5" y="149" width="1" height="1" fill="#3a3f46"/>
<text x="775.54" y="152.50" font-family="Liberation Sans" font-weight="normal" font-size="9.00" fill="#40454c" textLength="9.62" lengthAdjust="spacingAndGlyphs" >15</text>
<rect x="789.4" y="149" width="1" height="1" fill="#3a3f46"/>
<rect x="798.9" y="147.5" width="1" height="4" fill="#3a3f46"/>
<rect x="808.3" y="149" width="1" height="1" fill="#3a3f46"/>
<rect x="827.2" y="149" width="1" height="1" fill="#3a3f46"/>
<rect x="836.7" y="147.5" width="1" height="4" fill="#3a3f46"/>
<rect x="846.1" y="149" width="1" height="1" fill="#3a3f46"/>
<text x="851.14" y="152.50" font-family="Liberation Sans" font-weight="normal" font-size="9.00" fill="#40454c" textLength="9.70" lengthAdjust="spacingAndGlyphs" >17</text>
<rect x="865.0" y="149" width="1" height="1" fill="#3a3f46"/>
<rect x="874.5" y="147.5" width="1" height="4" fill="#3a3f46"/>
<rect x="883.9" y="149" width="1" height="1" fill="#3a3f46"/>
<text x="888.94" y="152.50" font-family="Liberation Sans" font-weight="normal" font-size="9.00" fill="#40454c" textLength="9.64" lengthAdjust="spacingAndGlyphs" >18</text>
<rect x="902.8" y="149" width="1" height="1" fill="#3a3f46"/>
<path d="M209 140.5 H217.5 V143 L213.5 148.5 L209.5 143Z" fill="#fff" stroke="#8a9099" stroke-width="0.9"/>
<path d="M213.5 148.5 L217.5 154 V156 H209 V154Z" fill="#d8dbe0" stroke="#8a9099" stroke-width="0.9"/>
<rect x="209" y="156" width="8.5" height="5" fill="#fff" stroke="#8a9099" stroke-width="0.9"/>
<path d="M811.5 155.5 V152.5 L815.5 148.5 L819.5 152.5 V155.5Z" fill="#dfe2e6" stroke="#7a8088" stroke-width="0.9"/>
<path d="M223.2 148.8 V154.6 H228.3" fill="none" stroke="#222" stroke-width="1.3"/>
<path d="M652.7 148.8 V154.6 H657.8" fill="none" stroke="#222" stroke-width="1.3"/>
<rect x="692.7" y="156.5" width="1" height="3.5" fill="#555"/>
<rect x="740.5" y="156.5" width="1" height="3.5" fill="#555"/>
<rect x="788.9" y="156.5" width="1" height="3.5" fill="#555"/>
<rect x="5.5" y="178.5" width="13.5" height="528" fill="#fff" stroke="#868c94"/>
<rect x="6" y="179" width="12.5" height="11.5" fill="#d5d8dd"/><rect x="6" y="190" width="12.5" height="1" fill="#868c94"/>
<rect x="11.5" y="197.4" width="1" height="1" fill="#3a3f46"/>
<rect x="10" y="206.9" width="4" height="1" fill="#3a3f46"/>
<rect x="11.5" y="216.3" width="1" height="1" fill="#3a3f46"/>
<g transform="translate(15.3,226.3) rotate(-90)"><text x="-2.91" y="0.00" font-family="Liberation Sans" font-weight="normal" font-size="9.00" fill="#40454c" textLength="5.55" lengthAdjust="spacingAndGlyphs" >1</text></g>
<rect x="11.5" y="235.2" width="1" height="1" fill="#3a3f46"/>
<rect x="10" y="244.7" width="4" height="1" fill="#3a3f46"/>
<rect x="11.5" y="254.1" width="1" height="1" fill="#3a3f46"/>
<g transform="translate(15.3,264.1) rotate(-90)"><text x="-2.62" y="0.00" font-family="Liberation Sans" font-weight="normal" font-size="9.00" fill="#40454c" textLength="5.25" lengthAdjust="spacingAndGlyphs" >2</text></g>
<rect x="11.5" y="273.1" width="1" height="1" fill="#3a3f46"/>
<rect x="10" y="282.5" width="4" height="1" fill="#3a3f46"/>
<rect x="11.5" y="291.9" width="1" height="1" fill="#3a3f46"/>
<g transform="translate(15.3,301.9) rotate(-90)"><text x="-2.50" y="0.00" font-family="Liberation Sans" font-weight="normal" font-size="9.00" fill="#40454c" textLength="5.04" lengthAdjust="spacingAndGlyphs" >3</text></g>
<rect x="11.5" y="310.9" width="1" height="1" fill="#3a3f46"/>
<rect x="10" y="320.3" width="4" height="1" fill="#3a3f46"/>
<rect x="11.5" y="329.8" width="1" height="1" fill="#3a3f46"/>
<g transform="translate(15.3,339.7) rotate(-90)"><text x="-2.35" y="0.00" font-family="Liberation Sans" font-weight="normal" font-size="9.00" fill="#40454c" textLength="4.75" lengthAdjust="spacingAndGlyphs" >4</text></g>
<rect x="11.5" y="348.6" width="1" height="1" fill="#3a3f46"/>
<rect x="10" y="358.1" width="4" height="1" fill="#3a3f46"/>
<rect x="11.5" y="367.5" width="1" height="1" fill="#3a3f46"/>
<g transform="translate(15.3,377.5) rotate(-90)"><text x="-2.51" y="0.00" font-family="Liberation Sans" font-weight="normal" font-size="9.00" fill="#40454c" textLength="5.04" lengthAdjust="spacingAndGlyphs" >5</text></g>
<rect x="11.5" y="386.4" width="1" height="1" fill="#3a3f46"/>
<rect x="10" y="395.9" width="4" height="1" fill="#3a3f46"/>
<rect x="11.5" y="405.4" width="1" height="1" fill="#3a3f46"/>
<g transform="translate(15.3,415.3) rotate(-90)"><text x="-2.62" y="0.00" font-family="Liberation Sans" font-weight="normal" font-size="9.00" fill="#40454c" textLength="5.18" lengthAdjust="spacingAndGlyphs" >6</text></g>
<rect x="11.5" y="424.2" width="1" height="1" fill="#3a3f46"/>
<rect x="10" y="433.7" width="4" height="1" fill="#3a3f46"/>
<rect x="11.5" y="443.1" width="1" height="1" fill="#3a3f46"/>
<g transform="translate(15.3,453.1) rotate(-90)"><text x="-2.63" y="0.00" font-family="Liberation Sans" font-weight="normal" font-size="9.00" fill="#40454c" textLength="5.26" lengthAdjust="spacingAndGlyphs" >7</text></g>
<rect x="11.5" y="462.0" width="1" height="1" fill="#3a3f46"/>
<rect x="10" y="471.5" width="4" height="1" fill="#3a3f46"/>
<rect x="11.5" y="480.9" width="1" height="1" fill="#3a3f46"/>
<g transform="translate(15.3,490.9) rotate(-90)"><text x="-2.55" y="0.00" font-family="Liberation Sans" font-weight="normal" font-size="9.00" fill="#40454c" textLength="5.10" lengthAdjust="spacingAndGlyphs" >8</text></g>
<rect x="11.5" y="499.8" width="1" height="1" fill="#3a3f46"/>
<rect x="10" y="509.3" width="4" height="1" fill="#3a3f46"/>
<rect x="11.5" y="518.8" width="1" height="1" fill="#3a3f46"/>
<g transform="translate(15.3,528.7) rotate(-90)"><text x="-2.59" y="0.00" font-family="Liberation Sans" font-weight="normal" font-size="9.00" fill="#40454c" textLength="5.18" lengthAdjust="spacingAndGlyphs" >9</text></g>
<rect x="11.5" y="537.6" width="1" height="1" fill="#3a3f46"/>
<rect x="10" y="547.1" width="4" height="1" fill="#3a3f46"/>
<rect x="11.5" y="556.5" width="1" height="1" fill="#3a3f46"/>
<g transform="translate(15.3,566.5) rotate(-90)"><text x="-4.96" y="0.00" font-family="Liberation Sans" font-weight="normal" font-size="9.00" fill="#40454c" textLength="9.59" lengthAdjust="spacingAndGlyphs" >10</text></g>
<rect x="11.5" y="575.5" width="1" height="1" fill="#3a3f46"/>
<rect x="10" y="584.9" width="4" height="1" fill="#3a3f46"/>
<rect x="11.5" y="594.3" width="1" height="1" fill="#3a3f46"/>
<g transform="translate(15.3,604.3) rotate(-90)"><text x="-4.96" y="0.00" font-family="Liberation Sans" font-weight="normal" font-size="9.00" fill="#40454c" textLength="9.69" lengthAdjust="spacingAndGlyphs" >11</text></g>
<rect x="11.5" y="613.2" width="1" height="1" fill="#3a3f46"/>
<rect x="10" y="622.7" width="4" height="1" fill="#3a3f46"/>
<rect x="11.5" y="632.1" width="1" height="1" fill="#3a3f46"/>
<g transform="translate(15.3,642.1) rotate(-90)"><text x="-4.96" y="0.00" font-family="Liberation Sans" font-weight="normal" font-size="9.00" fill="#40454c" textLength="9.70" lengthAdjust="spacingAndGlyphs" >12</text></g>
<rect x="11.5" y="651.0" width="1" height="1" fill="#3a3f46"/>
<rect x="10" y="660.5" width="4" height="1" fill="#3a3f46"/>
<rect x="11.5" y="670.0" width="1" height="1" fill="#3a3f46"/>
<g transform="translate(15.3,679.9) rotate(-90)"><text x="-4.96" y="0.00" font-family="Liberation Sans" font-weight="normal" font-size="9.00" fill="#40454c" textLength="9.64" lengthAdjust="spacingAndGlyphs" >13</text></g>
<rect x="11.5" y="688.8" width="1" height="1" fill="#3a3f46"/>
<rect x="10" y="698.3" width="4" height="1" fill="#3a3f46"/>
<rect x="1006" y="134" width="18" height="572" fill="url(#gSB)"/>
<rect x="1007.5" y="144.5" width="16" height="16" fill="#e9ebef" stroke="#8e949c"/>
<rect x="1009.5" y="146.5" width="11" height="8" fill="#f4f4f6" stroke="#555" stroke-width="0.8"/><path d="M1010.5 146.5 h3 v2.5 l-1.5 1.5 l-1.5 -1.5z M1014.5 157.5 h3 v-2.5 l-1.5 -1.5 l-1.5 1.5z" fill="#fff" stroke="#555" stroke-width="0.8"/><rect x="1014" y="151" width="0.9" height="1.5" fill="#555"/><rect x="1018" y="151" width="0.9" height="1.5" fill="#555"/>
<rect x="1010" y="140" width="10" height="1.5" fill="#9aa0a8"/>
<path d="M1011 172 h8 l-4 -4z" fill="#444"/>
<rect x="1007.5" y="178.5" width="15" height="214" rx="1.5" fill="url(#gThumb)" stroke="#9aa0a8"/>
<rect x="1011" y="283" width="8" height="0.9" fill="#777"/><rect x="1011" y="285.5" width="8" height="0.9" fill="#777"/><rect x="1011" y="288" width="8" height="0.9" fill="#777"/>
<path d="M1011 645 h8 l-4 4z" fill="#444"/>
<rect x="1006" y="654" width="18" height="1" fill="#c5c9cf"/>
<path d="M1012.5 664 h5 l-2.5 -3z M1012.5 667.5 h5 l-2.5 -3z" fill="#444"/>
<circle cx="1015" cy="679.5" r="3" fill="none" stroke="#555" stroke-width="1"/>
<path d="M1012.5 693.5 h5 l-2.5 3z M1012.5 697 h5 l-2.5 3z" fill="#444"/>
<text x="7.28" y="721.10" font-family="Liberation Sans" font-weight="normal" font-size="12.30" fill="#39404a" textLength="60.67" lengthAdjust="spacingAndGlyphs" >Page: 1 of 1</text>
<text x="87.25" y="721.10" font-family="Liberation Sans" font-weight="normal" font-size="12.30" fill="#39404a" textLength="52.50" lengthAdjust="spacingAndGlyphs" >Words: 19</text>
<text x="189.45" y="721.10" font-family="Liberation Sans" font-weight="normal" font-size="12.30" fill="#39404a" textLength="74.07" lengthAdjust="spacingAndGlyphs" >English (India)</text>
<rect x="77.0" y="708" width="1" height="18" fill="#b4b9c0"/><rect x="78.0" y="708" width="1" height="18" fill="#f7f8fa"/>
<rect x="149.0" y="708" width="1" height="18" fill="#b4b9c0"/><rect x="150.0" y="708" width="1" height="18" fill="#f7f8fa"/>
<rect x="272.0" y="708" width="1" height="18" fill="#b4b9c0"/><rect x="273.0" y="708" width="1" height="18" fill="#f7f8fa"/>
<rect x="745.5" y="708" width="1" height="18" fill="#b4b9c0"/><rect x="746.5" y="708" width="1" height="18" fill="#f7f8fa"/>
<path d="M157.2 716.3 L164.7 712.7 L172.9 719.2 L162.6 723.8Z" fill="#fafbfd"/>
<path d="M157.2 716.8 L162.6 723.2 L172.9 719.2" fill="none" stroke="#3a5cb8" stroke-width="1.9"/>
<path d="M158.5 715.8 L164.5 713.3" stroke="#6a6e74" stroke-width="1"/>
<path d="M165 709.8 L172 717.2 M172 710 L165.8 717.8" stroke="#e0402a" stroke-width="1.9" stroke-linecap="round"/>
<rect x="751.5" y="708.5" width="18" height="17.5" rx="2.5" fill="url(#gSel)" stroke="#e0c060"/>
<rect x="755.8" y="712.8" width="10.4" height="9.4" fill="#fff" stroke="#2e2e2e" stroke-width="1.2"/><g fill="#555"><rect x="757" y="714" width="8" height="1"/><rect x="757" y="716" width="8" height="1"/><rect x="757" y="718" width="8" height="1"/><rect x="757" y="720" width="8" height="1"/></g>
<path d="M774.5 712.8 h4.8 l0.8 1 l0.8 -1 h4.3 v9 h-4.3 l-0.8 1 l-0.8 -1 h-4.8z" fill="#fff" stroke="#555" stroke-width="0.9"/><path d="M780.1 713.8 V721.8" stroke="#777" stroke-width="0.7"/><path d="M775.8 715.3h3M775.8 717.3h3M775.8 719.3h3M781.3 715.3h3M781.3 717.3h3M781.3 719.3h3" stroke="#666" stroke-width="0.7"/>
<rect x="791.8" y="712.8" width="8.6" height="7.6" fill="#fff" stroke="#555" stroke-width="0.9"/><path d="M793.3 715h5.5M793.3 717h4" stroke="#555" stroke-width="0.8"/><circle cx="799.7" cy="719.8" r="3.3" fill="#2e8a9a" stroke="#1e5a70" stroke-width="0.5"/>
<g fill="#555"><rect x="811" y="713" width="1" height="1"/><rect x="813" y="713" width="7" height="1"/><rect x="813" y="715" width="1" height="1"/><rect x="815" y="715" width="5" height="1"/><rect x="815" y="717" width="5" height="1"/><rect x="813" y="719" width="1" height="1"/><rect x="815" y="719" width="5" height="1"/><rect x="811" y="721" width="1" height="1"/><rect x="813" y="721" width="7" height="1"/></g>
<g fill="#555"><rect x="829" y="713" width="10" height="1"/><rect x="829" y="715" width="10" height="1"/><rect x="829" y="717" width="10" height="1"/><rect x="829" y="719" width="10" height="1"/><rect x="829" y="721" width="10" height="1"/></g>
<text x="852.90" y="720.80" font-family="Liberation Sans" font-weight="normal" font-size="12.30" fill="#39404a" textLength="26.98" lengthAdjust="spacingAndGlyphs" >100%</text>
<circle cx="896" cy="717" r="7" fill="url(#gCirc)" stroke="#70767e"/><rect x="892" y="716.3" width="8" height="1.6" fill="#333"/>
<rect x="903.5" y="716.5" width="101" height="1" fill="#8f949b"/>
<path d="M951 709.5 H959 V718 L955 722 L951 718Z" fill="url(#gCirc)" stroke="#7a8088" stroke-width="0.9"/>
<circle cx="1012" cy="717" r="7" fill="url(#gCirc)" stroke="#70767e"/><rect x="1008" y="716.3" width="8" height="1.6" fill="#333"/><rect x="1011.2" y="713" width="1.6" height="8" fill="#333"/>
<path d="M15.5 741.5 L23.3 740.3 V747.3 H15.5Z M24.7 740.1 L32.5 739 V747.3 H24.7Z M15.5 748.7 H23.3 V755.7 L15.5 754.5Z M24.7 748.7 H32.5 V757 L24.7 755.9Z" fill="#ffffff"/>
<rect x="48" y="728" width="288" height="40" fill="#f0f0f0"/>
<circle cx="70.5" cy="745.3" r="5.3" fill="none" stroke="#222" stroke-width="1.4"/><path d="M66.8 749 L60.5 755.3" stroke="#222" stroke-width="1.5"/>
<text x="88.17" y="753.50" font-family="Liberation Sans" font-weight="normal" font-size="15.50" fill="#2a2a2a" textLength="128.77" lengthAdjust="spacingAndGlyphs" >Type here to search</text>
<path d="M276 768 Q282 754 296 751.6 L336 748.2 V768Z" fill="url(#gSand)"/>
<path d="M258 768 Q270 753 296 752.3 Q301 752.3 302.2 754.6 Q290 755.5 283 760 Q278 763.5 276.5 768Z" fill="url(#gPath)"/>
<path d="M295.7 764 L308 761.5" stroke="#a8783a" stroke-width="1" opacity="0.7"/>
<ellipse cx="320" cy="758.3" rx="13.2" ry="6.6" fill="#5cbcf0" stroke="#3a9ad0" stroke-width="0.6"/><ellipse cx="320" cy="756.8" rx="4" ry="1.7" fill="#2a88b0"/>
<rect x="292.4" y="746" width="3" height="18.5" fill="#ece6ea" stroke="#c8b8c0" stroke-width="0.4"/>
<path d="M276 746.5 Q282 737 293.8 734.2 Q305.6 737 311.6 746.5Z" fill="#f07a68"/>
<path d="M282.2 745.5 Q285 738 290.5 735 Q288 740 289.2 746Z M298.5 746 Q299.6 740 297.1 735 Q302.6 738 305.4 745.5Z" fill="#2a7cb0"/>
<path d="M276 746.5 Q279.5 748.8 283.2 746.8 Q286.5 748.8 289.8 746.8 Q293.4 748.8 297 746.8 Q300.6 748.8 304.2 746.8 Q308 748.8 311.6 746.5" fill="none" stroke="#dcc8e0" stroke-width="1.2"/>
<circle cx="293.8" cy="731.8" r="2.3" fill="#f4f0f2" stroke="#c8b8c0" stroke-width="0.8"/>
<circle cx="362.8" cy="747.5" r="11" fill="#db3d2e"/>
<path d="M362.8 747.5 L373.3 744 A11 11 0 0 1 360 758.1Z" fill="#f2c02e"/>
<path d="M362.8 747.5 L360 758.1 A11 11 0 0 1 352.6 741.8Z" fill="#2ea04a"/>
<circle cx="362.8" cy="747.5" r="5" fill="#fff"/><circle cx="362.8" cy="747.5" r="3.9" fill="#3f7fe0"/>
<circle cx="412" cy="747.8" r="12" fill="#1ed760"/>
<path d="M404.2 743.8 Q412 740.8 420.2 744.6 M405.2 747.8 Q412 745.6 418.6 748.8 M406.2 751.6 Q412 749.8 417.2 752.4" fill="none" stroke="#111" stroke-width="2.1" stroke-linecap="round"/>
<rect x="437" y="728" width="44.5" height="40" fill="#5b4f49"/><rect x="481.5" y="728" width="3.5" height="40" fill="#4a3e38"/>
<path d="M452 737 h18.5 v20 h-20.5 v-18z" fill="url(#gWord)" stroke="#2858a8" stroke-width="0.8"/>
<path d="M451.5 750 L470 748 V756.5 H451.5Z" fill="#f4f7fb"/>
<path d="M453.5 740.5 L456.5 753 L459.6 753 L461.6 746.5 L463.6 753 L466.7 753 L469.7 740.5 L466.8 740.5 L465.1 748.4 L462.9 740.5 L460.3 740.5 L458.1 748.4 L456.4 740.5Z" fill="#1a4aa0"/>
<path d="M462 752 L470 748 L471.5 752.5 L465 756Z" fill="#fff" stroke="#8ab0e0" stroke-width="0.6"/>
<g transform="rotate(-20 508.7 749)"><ellipse cx="508.7" cy="749" rx="11" ry="8" fill="#c2ddef" stroke="#7aa6c8" stroke-width="0.6"/></g>
<circle cx="501.7" cy="749" r="1.8" fill="#e0584a"/><circle cx="505.7" cy="745.2" r="1.7" fill="#5cb84a"/><circle cx="510.6" cy="743.9" r="1.7" fill="#e8c040"/><circle cx="507.9" cy="750.6" r="1.5" fill="#233a5a"/>
<path d="M509.5 759 L517.5 741" stroke="#d8a060" stroke-width="2.2" stroke-linecap="round"/><path d="M516.8 742 L519.6 737.2" stroke="#c89a70" stroke-width="3" stroke-linecap="round"/>
<rect x="374.5" y="766" width="8.2" height="2" fill="#9a8a80"/>
<rect x="343" y="766" width="31" height="2" fill="#e8c3b0"/>
<rect x="392" y="766" width="40" height="2" fill="#e8c3b0"/>
<rect x="437" y="766" width="44" height="2" fill="#e8c3b0"/>
<rect x="489.6" y="766" width="40.39999999999998" height="2" fill="#e8c3b0"/>
<circle cx="700.2" cy="747.8" r="10.3" fill="url(#gSun)" stroke="#2a1f1a" stroke-width="0.8"/>
<g fill="#fde9b4"><rect x="692.3" y="741.2" width="5.2" height="1.7"/><rect x="699" y="741.2" width="12.7" height="1.7"/><rect x="692" y="745.2" width="19.7" height="1.7"/><rect x="688.2" y="749.1" width="12.5" height="1.7"/><rect x="702.8" y="749.1" width="5.8" height="1.7"/><rect x="688.2" y="753.1" width="20" height="1.7"/></g>
<text x="719.29" y="754.00" font-family="Liberation Sans" font-weight="normal" font-size="14.50" fill="#ffffff" textLength="30.12" lengthAdjust="spacingAndGlyphs" >40°C</text>
<path d="M775.3 751 L781 745 L786.7 751" fill="none" stroke="#fff" stroke-width="1.2"/>
<rect x="800.8" y="745.2" width="7.6" height="7.2" rx="2" fill="none" stroke="#fff" stroke-width="1.1"/><path d="M808.4 747.5 L811 746.2 V751.4 L808.4 750.1" fill="none" stroke="#fff" stroke-width="1.1"/><path d="M801.5 741.3 Q805 739.6 808.5 741.3 M801.5 754.6 Q805 756.3 808.5 754.6" fill="none" stroke="#fff" stroke-width="1"/>
<rect x="825.7" y="742.8" width="10.8" height="8.5" fill="none" stroke="#fff" stroke-width="1.1"/><path d="M830.5 751.3 V754.3 M826 754.5 H832.5" stroke="#fff" stroke-width="1.1"/><rect x="821.8" y="742.8" width="3.8" height="3.8" fill="#3d2e27" stroke="#fff" stroke-width="1"/><path d="M823.4 746.6 V755" stroke="#fff" stroke-width="1"/>
<path d="M845.5 746 h2.3 l3.2 -3.3 v11 l-3.2 -3.3 h-2.3z" fill="none" stroke="#fff" stroke-width="1.1"/><path d="M853.5 745.8 q1.3 2.4 0 4.8 M856.3 744.2 q2.3 4 0 8 M859.2 742.5 q3.3 5.7 0 11.4" fill="none" stroke="#fff" stroke-width="1.1"/>
<text x="870.61" y="752.50" font-family="Liberation Sans" font-weight="normal" font-size="12.50" fill="#ffffff" textLength="23.50" lengthAdjust="spacingAndGlyphs" >ENG</text>
<text x="921.24" y="742.70" font-family="Liberation Sans" font-weight="normal" font-size="12.30" fill="#ffffff" textLength="27.64" lengthAdjust="spacingAndGlyphs" >22:33</text>
<text x="907.04" y="760.90" font-family="Liberation Sans" font-weight="normal" font-size="12.30" fill="#ffffff" textLength="57.65" lengthAdjust="spacingAndGlyphs" >17-05-2023</text>
<path d="M983 740.3 h16.3 v12 h-9 l-4 3.8 v-3.8 h-3.3z" fill="#fff"/><path d="M986 744h9.7M986 746.4h9.7M986 748.8h6" stroke="#3d2e27" stroke-width="1.1"/>
<circle cx="998.7" cy="755.4" r="7.6" fill="#3b3b3b" stroke="#9a9a9a" stroke-width="1"/>
<text x="994.90" y="760.00" font-family="Liberation Sans" font-weight="normal" font-size="11.50" fill="#ffffff" textLength="7.59" lengthAdjust="spacingAndGlyphs" >7</text>
<rect x="1019" y="728" width="1" height="40" fill="#6e625c"/>
</svg>
</body></html>
